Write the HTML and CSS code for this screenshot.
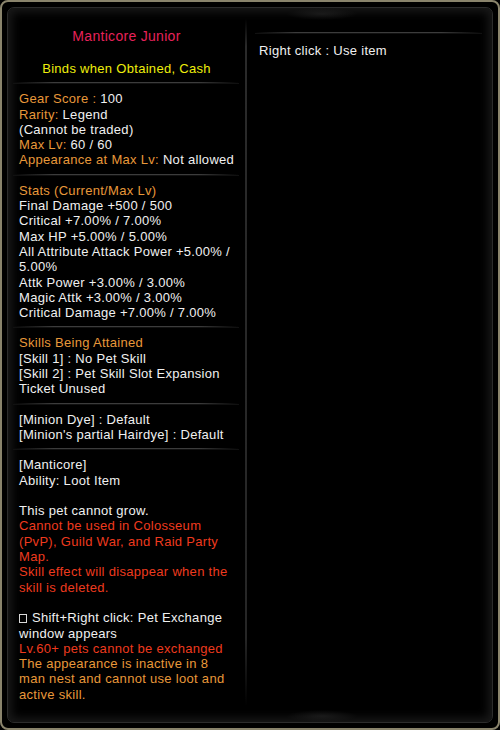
FILE: index.html
```html
<!DOCTYPE html>
<html>
<head>
<meta charset="utf-8">
<link rel="stylesheet" href="styles.css">
</head>
<body>
<div class="frame">
  <div class="panel">
    <div class="col-left">
      <div class="title">Manticore Junior</div>
      <div class="binds">Binds when Obtained, Cash</div>
      <div class="sep"></div>
      <div class="sec">
        <div><span class="or">Gear Score :</span> 100</div>
        <div><span class="or">Rarity:</span> Legend</div>
        <div>(Cannot be traded)</div>
        <div><span class="or">Max Lv:</span> 60 / 60</div>
        <div><span class="or">Appearance at Max Lv:</span> Not allowed</div>
      </div>
      <div class="sep"></div>
      <div class="sec">
        <div class="or">Stats (Current/Max Lv)</div>
        <div>Final Damage +500 / 500</div>
        <div>Critical +7.00% / 7.00%</div>
        <div>Max HP +5.00% / 5.00%</div>
        <div>All Attribute Attack Power +5.00% / 5.00%</div>
        <div>Attk Power +3.00% / 3.00%</div>
        <div>Magic Attk +3.00% / 3.00%</div>
        <div>Critical Damage +7.00% / 7.00%</div>
      </div>
      <div class="sep"></div>
      <div class="sec">
        <div class="or">Skills Being Attained</div>
        <div>[Skill 1] : No Pet Skill</div>
        <div>[Skill 2] : Pet Skill Slot Expansion Ticket Unused</div>
      </div>
      <div class="sep"></div>
      <div class="sec">
        <div>[Minion Dye] : Default</div>
        <div>[Minion's partial Hairdye] : Default</div>
      </div>
      <div class="sep"></div>
      <div class="sec">
        <div>[Manticore]</div>
        <div>Ability: Loot Item</div>
        <div class="blank"></div>
        <div>This pet cannot grow.</div>
        <div class="rd">Cannot be used in Colosseum (PvP), Guild War, and Raid Party Map.</div>
        <div class="rd">Skill effect will disappear when the skill is deleted.</div>
        <div class="blank"></div>
        <div><span class="box"></span> Shift+Right click: Pet Exchange window appears</div>
        <div class="rd">Lv.60+ pets cannot be exchanged</div>
        <div class="or">The appearance is inactive in 8 man nest and cannot use loot and active skill.</div>
      </div>
    </div>
    <div class="divider"></div>
    <div class="col-right">
      <div class="sep sep-r"></div>
      <div class="sec">
        <div>Right click : Use item</div>
      </div>
    </div>
  </div>
</div>
</body>
</html>
```

FILE: styles.css
```css
html, body {
  margin: 0;
  padding: 0;
  background: #000;
}

body {
  font-family: "Liberation Sans", Arial, sans-serif;
  font-size: 13px;
  letter-spacing: 0.3px;
  color: #f0f0f0;
}

.frame {
  width: 500px;
  height: 730px;
  box-sizing: border-box;
  border: 2px solid #8a846c;
  border-radius: 8px;
  padding: 5px;
  background: #000;
}

.panel {
  position: relative;
  height: 100%;
  box-sizing: border-box;
  border: 1px solid #2c2c2c;
  border-radius: 7px;
  background: #000;
  box-shadow: inset 0 0 10px 4px #191919;
  display: grid;
  grid-template-columns: 237px 2px 1fr;
}

.panel::before,
.panel::after {
  content: "";
  position: absolute;
  left: 278px;
  width: 72px;
  height: 12px;
  background: radial-gradient(ellipse at center, rgba(60,60,60,0.35), rgba(0,0,0,0) 70%);
}

.panel::before {
  top: 0;
}

.panel::after {
  bottom: 0;
}

.col-left {
  padding: 20px 10px 0 11px;
  min-width: 0;
}

.title {
  font-size: 14px;
  line-height: 16px;
  color: #e6225a;
  text-align: center;
  margin-left: -11px;
  margin-right: -10px;
}

.binds {
  margin-top: 17px;
  margin-bottom: 1px;
  line-height: 15.3px;
  color: #eeee0c;
  text-align: center;
  margin-left: -11px;
  margin-right: -10px;
}

.sec {
  line-height: 15.3px;
}

.blank {
  height: 15.3px;
}

.sep {
  height: 1px;
  margin: 6px -4px 8px -6px;
  background: linear-gradient(90deg, rgba(70,70,70,0) 0%, #3c3c3c 18%, #3c3c3c 82%, rgba(70,70,70,0) 100%);
  box-shadow: 0 1px 0 #111;
}

.or {
  color: #e8983a;
}

.rd {
  color: #ee3a1e;
}

.box {
  display: inline-block;
  width: 6px;
  height: 7px;
  border: 1px solid #d8d8d8;
  vertical-align: -1px;
  margin-right: 1px;
}

.divider {
  margin: 11px 0 16px;
  background: linear-gradient(180deg, rgba(40,40,40,0) 0%, #2a2a2a 4%, #262626 90%, rgba(40,40,40,0) 100%);
  width: 2px;
}

.col-right {
  padding: 24px 10px 0 12px;
}

.sep-r {
  margin: 0 0 10px -4px;
}
```
